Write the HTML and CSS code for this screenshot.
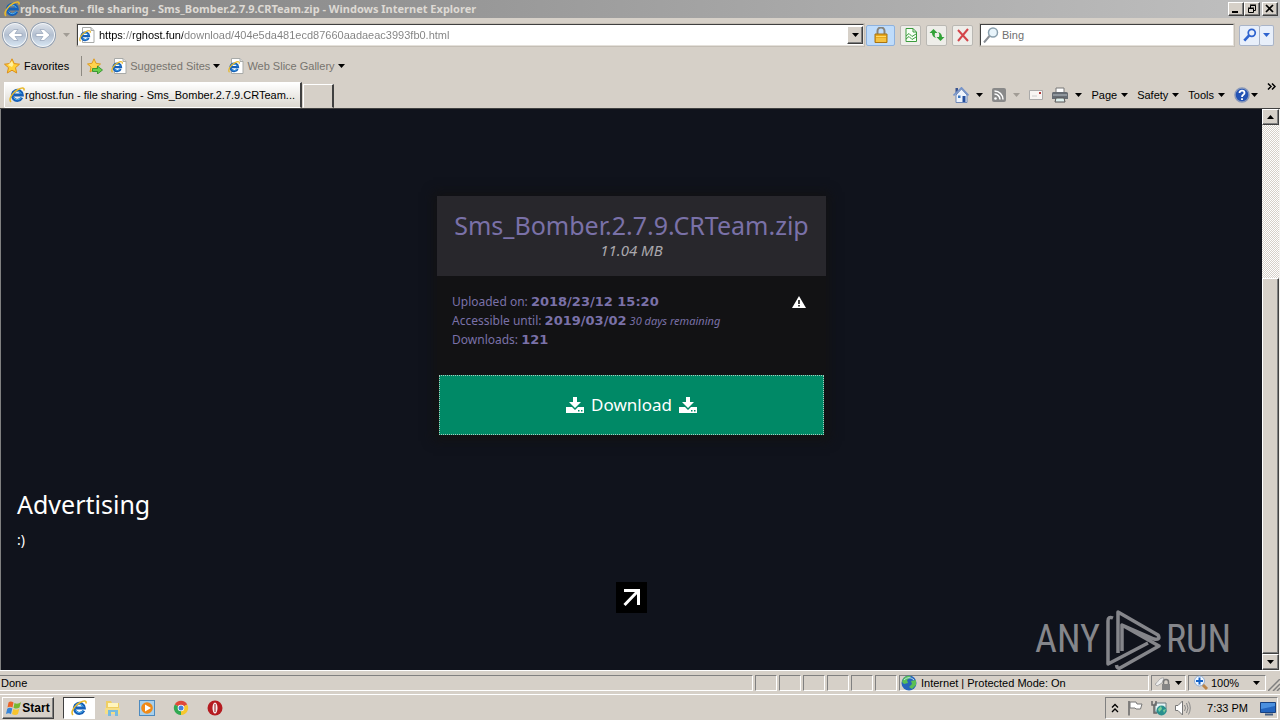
FILE: index.html
```html
<!DOCTYPE html>
<html lang="en">
<head>
    <meta charset="UTF-8">
    <meta name="viewport" content="width=device-width, initial-scale=1.0">
    <title>rghost.fun - file sharing - Sms_Bomber.2.7.9.CRTeam.zip</title>
    <link rel="stylesheet" href="styles.css">
</head>
<body>
    <svg class="defs" aria-hidden="true">
        <symbol id="ie" viewBox="0 0 16 16">
            <path d="M12.8 10.6A5 5 0 1 1 13.3 8H5" fill="none" stroke="#1660b8" stroke-width="3"/>
            <path d="M12.3 10.2A4.4 4.4 0 0 1 4.600 10.600M4.200 7A4.400 4.400 0 0 1 12.400 7" fill="none" stroke="#52b4ee" stroke-width="1"/>
            <path d="M2 15C-1 12 4 5 9 2.500C13 .3 16 .3 14.800 3.600" fill="none" stroke="#e8b92c" stroke-width="1.600"/>
        </symbol>
        <symbol id="ie-page" viewBox="0 0 16 16">
            <path d="M3.500 .5H12L15 3.500V15.500H3.500Z" fill="#fff" stroke="#a8aaa8"/>
            <path d="M12 .5V3.500H15" fill="#ddd" stroke="#a8aaa8"/>
            <use href="#ie" x="0" y="3" width="12" height="12"/>
        </symbol>
        <symbol id="caret" viewBox="0 0 7 4">
            <path d="M0 0H7L3.500 4Z" fill="currentColor"/>
        </symbol>
        <symbol id="save" viewBox="0 0 18 16">
            <path d="M7 0H11V5H15L9 11L3 5H7Z" fill="currentColor"/>
            <path d="M0 10H6L9 13L12 10H18V16H0Z" fill="currentColor"/>
            <path d="M12 13H13.500V14.500H12ZM15 13H16.500V14.500H15Z" fill="#008966"/>
        </symbol>
    </svg>

    <div class="titlebar">
        <svg class="icon"><use href="#ie"/></svg>
        <span class="caption">rghost.fun - file sharing - Sms_Bomber.2.7.9.CRTeam.zip - Windows Internet Explorer</span>
        <div class="window-buttons">
            <button class="bevel" aria-label="Minimize"><svg width="10" height="10" viewBox="0 0 10 10"><path d="M1 8H7" stroke="#000" stroke-width="2"/></svg></button>
            <button class="bevel" aria-label="Restore"><svg width="10" height="10" viewBox="0 0 10 10"><path d="M3.500 4V1.500H8.500V6.500H7M1.500 4.500H6.500V8.500H1.500ZM3 1H9M1 4H7" fill="none" stroke="#000"/></svg></button>
            <button class="bevel close" aria-label="Close"><svg width="10" height="10" viewBox="0 0 10 10"><path d="M1 1L8 8M8 1L1 8" stroke="#000" stroke-width="1.700"/></svg></button>
        </div>
    </div>

    <div class="navbar">
        <div class="history">
            <button class="round" aria-label="Back"><svg width="26" height="26" viewBox="0 0 26 26"><path d="M20 11.500H13L16 7.500H12L6 13L12 18.500H16L13 14.500H20Z" fill="#fff" stroke="#93a2b8" stroke-width=".7"/></svg></button>
            <button class="round" aria-label="Forward"><svg width="26" height="26" viewBox="0 0 26 26"><path d="M6 11.500H13L10 7.500H14L20 13L14 18.500H10L13 14.500H6Z" fill="#fff" stroke="#93a2b8" stroke-width=".7"/></svg></button>
            <button class="plain recent" aria-label="Recent pages"><svg class="caret faded"><use href="#caret"/></svg></button>
        </div>
        <div class="field address">
            <svg class="icon"><use href="#ie-page"/></svg>
            <input type="text" class="url" aria-label="Address" value="https://rghost.fun/download/404e5da481ecd87660aadaeac3993fb0.html">
            <button class="bevel drop" aria-label="Show addresses"><svg class="caret"><use href="#caret"/></svg></button>
        </div>
        <div class="nav-tools">
            <button class="tool lock" aria-label="Security report"><svg class="icon" viewBox="0 0 16 16"><path d="M4.500 8V4A3.500 3.500 0 0 1 11.500 4V8" fill="none" stroke="#87837a" stroke-width="2"/><path d="M2 7H14V15.500H2Z" fill="#e9a91b" stroke="#a87414"/><path d="M3 9.500H13M3 12H13M3 14H13" stroke="#ffd968"/></svg></button>
            <button class="tool" aria-label="Compatibility view"><svg class="icon" viewBox="0 0 16 16"><path d="M3 1.500H10L13.500 5V14.500H3Z" fill="#f7fff5" stroke="#3b9b3d"/><path d="M10 1.500V5H13M3 9L6 6.500L9 9.500L13 7M3 12L6 9.500L9 12.500L13 10" fill="none" stroke="#3b9b3d"/></svg></button>
            <button class="tool" aria-label="Refresh"><svg class="icon" viewBox="0 0 16 16"><path d="M4.500 2L.5 6H3C3 8.500 4.500 10.500 7 11C5.500 9.500 5.500 8 6 6H8.500ZM11.500 14L15.500 10H13C13 7.500 11.500 5.500 9 5C10.500 6.500 10.500 8 10 10H7.500Z" fill="#32a237"/></svg></button>
            <button class="tool" aria-label="Stop"><svg class="icon" viewBox="0 0 16 16"><path d="M3 3L13 14M13 2L3 14" stroke="#d4454a" stroke-width="2"/></svg></button>
        </div>
        <div class="field search">
            <svg class="icon" viewBox="0 0 16 16"><circle cx="10" cy="5.500" r="4.500" fill="#e8f4fb" stroke="#8aa0ae" stroke-width="1.500"/><path d="M6.500 9L1 15.500" stroke="#8a8f96" stroke-width="2"/></svg>
            <input type="text" aria-label="Search" placeholder="Bing">
        </div>
        <div class="search-buttons">
            <button class="tool" aria-label="Search"><svg width="14" height="14" viewBox="0 0 16 16"><circle cx="10" cy="5.500" r="4" fill="none" stroke="#2e63cf" stroke-width="2"/><path d="M7 8.500L1.500 14.500" stroke="#2e63cf" stroke-width="3"/></svg></button>
            <button class="tool narrow" aria-label="Search options"><svg class="caret blue"><use href="#caret"/></svg></button>
        </div>
    </div>

    <div class="favbar">
        <button class="plain favorites"><svg class="icon" viewBox="0 0 16 16"><path d="M8 .8L10.200 5.600L15.500 6.200L11.500 9.700L12.700 15L8 12.200L3.300 15L4.500 9.700L.5 6.200L5.800 5.600Z" fill="#ffd13a" stroke="#dd8e18"/><path d="M8 3L9.400 6.500L8 9L4 7Z" fill="#fff0a0"/></svg>Favorites</button>
        <button class="plain add" aria-label="Add to favorites bar"><svg class="icon" viewBox="0 0 16 16"><path d="M7 .8L9 5.300L13.500 6L10 9L11 14L7 11.500L3 14L4 9L.5 6L5 5.300Z" fill="#ffd34d" stroke="#dd9a22"/><path d="M5.500 10.500H10.500V8L15.500 12L10.500 16V13.500H5.500Z" fill="#6ad04d" stroke="#258b24" stroke-width=".8"/></svg></button>
        <button class="plain muted"><svg class="icon"><use href="#ie-page"/></svg>Suggested Sites <svg class="caret"><use href="#caret"/></svg></button>
        <button class="plain muted"><svg class="icon"><use href="#ie-page"/></svg>Web Slice Gallery <svg class="caret"><use href="#caret"/></svg></button>
    </div>

    <div class="tabrow">
        <button class="tab"><svg class="icon"><use href="#ie"/></svg>rghost.fun - file sharing - Sms_Bomber.2.7.9.CRTeam...</button>
        <button class="new-tab" aria-label="New tab"></button>
        <div class="commands">
            <button class="plain wide" aria-label="Home"><svg class="icon" viewBox="0 0 16 16"><path d="M2.500 1H5V5L2.500 7Z" fill="#39538e"/><path d="M3 8L8.500 2L14 8V15.500H3Z" fill="#edf3fc" stroke="#6d87b8"/><path d="M.5 8.500L8.500 .8L15.500 8.500" fill="none" stroke="#7593c9" stroke-width="1.600"/><path d="M9.500 9H12.500V15H9.500Z" fill="#244f9d"/><path d="M5 8.500H7.500V11H5Z" fill="#3a77bf"/></svg><svg class="caret"><use href="#caret"/></svg></button>
            <button class="plain wide" aria-label="Feeds"><svg class="icon small" viewBox="0 0 14 14"><rect width="14" height="14" rx="2" fill="#898989"/><circle cx="3.500" cy="10.500" r="1.300" fill="#fff"/><path d="M2.500 6A5.500 5.500 0 0 1 8 11.500M2.500 3A8.500 8.500 0 0 1 11 11.500" fill="none" stroke="#fff" stroke-width="1.500"/></svg><svg class="caret faded"><use href="#caret"/></svg></button>
            <button class="plain" aria-label="Read mail"><svg class="icon small" viewBox="0 0 14 14"><path d="M.5 2.500H13.500V11.500H.5Z" fill="#f7f5f3" stroke="#aaa"/><path d="M10 4H12V6H10Z" fill="#b33b3b"/><path d="M3 8H8" stroke="#ccc"/></svg></button>
            <button class="plain wide" aria-label="Print"><svg class="icon" viewBox="0 0 16 16"><path d="M4 1H12V6H4Z" fill="#fff" stroke="#777"/><path d="M0 6.500C0 5 1 5 2 5H14C16 5 16 6 16 7V12H0Z" fill="#666c73"/><path d="M1 8H15" stroke="#b8c0c6"/><path d="M4 11H12L13 15H3Z" fill="#dff1ef" stroke="#555"/></svg><svg class="caret"><use href="#caret"/></svg></button>
            <button class="plain">Page<svg class="caret"><use href="#caret"/></svg></button>
            <button class="plain">Safety<svg class="caret"><use href="#caret"/></svg></button>
            <button class="plain">Tools<svg class="caret"><use href="#caret"/></svg></button>
            <button class="plain help" aria-label="Help"><svg class="icon" viewBox="0 0 16 16"><circle cx="8" cy="8" r="7" fill="#2453b4" stroke="#8797b9" stroke-width="1.500"/><path d="M5.500 6C5.500 2.800 10.500 3 10.500 6C10.500 8 8 7.700 8 10M8 11.300V13" fill="none" stroke="#fff" stroke-width="1.800"/></svg><svg class="caret"><use href="#caret"/></svg></button>
            <button class="plain more" aria-label="More commands"><svg width="9" height="7" viewBox="0 0 9 7"><path d="M1 .5L4 3.500L1 6.500M5 .5L8 3.500L5 6.500" fill="none" stroke="#000" stroke-width="1.500"/></svg></button>
        </div>
    </div>

    <div class="viewport">
        <main class="page">
            <section class="file-card">
                <header class="file-header">
                    <h1>Sms_Bomber.2.7.9.CRTeam.zip</h1>
                    <em>11.04 MB</em>
                </header>
                <div class="file-info">
                    <div>
                        <p>Uploaded on: <strong>2018/23/12 15:20</strong></p>
                        <p>Accessible until: <strong>2019/03/02</strong> <em>30 days remaining</em></p>
                        <p>Downloads: <strong>121</strong></p>
                    </div>
                    <a href="#" class="report" aria-label="Report file"><svg width="14" height="12" viewBox="0 0 14 12"><path d="M7 0L14 12H0Z" fill="#fff"/><path d="M7 4V8M7 9V10.500" stroke="#111" stroke-width="1.600"/></svg></a>
                </div>
                <button class="download"><svg width="18" height="16"><use href="#save"/></svg>Download<svg width="18" height="16"><use href="#save"/></svg></button>
            </section>
            <section class="ads">
                <h2>Advertising</h2>
                <p>:)</p>
            </section>
            <a href="#" class="expand" aria-label="Open"><svg width="31" height="31" viewBox="0 0 31 31"><path d="M8 8.500H22.500V23M22 9L8.500 23" fill="none" stroke="#fff" stroke-width="3"/></svg></a>
            <div class="watermark">
                <span>ANY</span>
                <svg width="58" height="62" viewBox="0 0 58 62"><path d="M14 45V4L54 27Q57 32 50 31L18 17V43M18 17L55 38L16 60Q13 61 12.500 57M9 10Q4 8 4 13V56L44 35" fill="none" stroke="#85868b" stroke-width="3.500" stroke-linejoin="round"/></svg>
                <span>RUN</span>
            </div>
        </main>
        <div class="scrollbar">
            <button class="bevel" aria-label="Scroll up"><svg class="caret up"><use href="#caret"/></svg></button>
            <div class="track"><div class="thumb bevel"></div></div>
            <button class="bevel" aria-label="Scroll down"><svg class="caret"><use href="#caret"/></svg></button>
        </div>
    </div>

    <div class="statusbar">
        <div class="cell message">Done</div>
        <div class="cell"></div>
        <div class="cell"></div>
        <div class="cell"></div>
        <div class="cell"></div>
        <div class="cell"></div>
        <div class="cell"></div>
        <div class="cell zone"><svg class="icon" viewBox="0 0 16 16"><circle cx="8" cy="8" r="7.500" fill="#2764ba"/><path d="M2 4C5 0 9 0 10 2L6 5L7 8L3 9L1 7ZM10 6L15 5V10L11 14L8 12L11 9Z" fill="#5abf54"/><path d="M3 5C6 2 10 2 13 5" fill="none" stroke="#b9e6f2"/></svg>Internet | Protected Mode: On</div>
        <div class="cell privacy"><svg class="icon" viewBox="0 0 16 16"><path d="M0 9C3 8 4 2 9 3L7 8L2 11Z" fill="#eee" stroke="#aaa"/><path d="M8.500 9V7A2.500 2.500 0 0 1 13.500 7V9" fill="none" stroke="#777" stroke-width="1.500"/><path d="M7 9H15V15H7Z" fill="#858585"/></svg><svg class="caret"><use href="#caret"/></svg></div>
        <div class="cell zoom"><svg class="icon" viewBox="0 0 16 16"><path d="M9 9L14 14" stroke="#bb8548" stroke-width="3"/><circle cx="6.500" cy="6" r="5" fill="#eef6ff" stroke="#91add2"/><path d="M6.500 2.500V9.500M3 6H10" stroke="#1463c9" stroke-width="2"/></svg><span>100%</span><svg class="caret"><use href="#caret"/></svg></div>
        <svg class="grip" width="12" height="12" viewBox="0 0 12 12"><path d="M0 12L12 0M5 12L12 5M9 12L12 9" stroke="#808080" stroke-width="1.500"/></svg>
    </div>

    <div class="taskbar">
        <button class="bevel start"><svg class="icon" viewBox="0 0 16 16"><path d="M2.500 2.500C4 1 6 1.500 7.500 2.500L6.500 7.500C5 6.500 3 6.500 1.500 7.500Z" fill="#eb6326"/><path d="M8.500 3C11 4.300 13 3.500 15 2L13.500 7.500C11.500 9 9.500 8.800 7.500 7.700Z" fill="#77b82f"/><path d="M1.200 8.700C3 7.500 5 7.700 6.300 8.600L5 14C3.500 13 1.500 13 0 14Z" fill="#3685d8"/><path d="M7.300 9C9.500 10 11.500 10 13.300 8.700L12 14C10 15.500 8 15.200 6 14Z" fill="#f8c42c"/></svg>Start</button>
        <div class="launchers">
            <button class="launcher active" aria-label="Internet Explorer"><svg class="icon"><use href="#ie"/></svg></button>
            <button class="launcher" aria-label="Explorer"><svg class="icon" viewBox="0 0 16 16"><path d="M1 1H6L7 3H14V13H1Z" fill="#f0cf62"/><path d="M3 3H13V7H3Z" fill="#fff5bd"/><path d="M0 8H15V14H0Z" fill="#f5de86"/><path d="M3 16V10H13V16H10V12H6V16Z" fill="#77bbdf"/></svg></button>
            <button class="launcher" aria-label="Media Player"><svg class="icon" viewBox="0 0 16 16"><rect x=".5" y=".5" width="15" height="15" fill="#a8d0ec" stroke="#4d8abf"/><circle cx="8" cy="8" r="5.800" fill="#f18a16"/><path d="M6 4.500L12 8L6 11.500Z" fill="#fff"/></svg></button>
            <button class="launcher" aria-label="Chrome"><svg class="icon" viewBox="0 0 16 16"><path d="M8 8L1.800 4.500A7 7 0 0 1 14.200 4.500Z" fill="#df4839"/><path d="M8 8V15A7 7 0 0 1 1.800 4.500Z" fill="#31a952"/><path d="M8 8L14.200 4.500A7 7 0 0 1 8 15Z" fill="#f6c72d"/><circle cx="8" cy="8" r="3.300" fill="#fff"/><circle cx="8" cy="8" r="2.500" fill="#4580dd"/></svg></button>
            <button class="launcher" aria-label="Opera"><svg class="icon" viewBox="0 0 16 16"><circle cx="8" cy="8" r="7.500" fill="#b51b20"/><ellipse cx="8" cy="8" rx="2.500" ry="5.500" fill="#f9eeee"/><path d="M8 4V12" stroke="#8e171b"/></svg></button>
        </div>
        <div class="tray">
            <svg width="8" height="10" viewBox="0 0 8 10"><path d="M1 4.500L4 1.500L7 4.500M1 9L4 6L7 9" fill="none" stroke="#000" stroke-width="1.300"/></svg>
            <svg class="icon" viewBox="0 0 16 16"><path d="M2 1V15.500" stroke="#666" stroke-width="1.500"/><path d="M3 2H9L10 4H15L13.500 9H9L8 8H3Z" fill="#fff" stroke="#777"/></svg>
            <svg class="icon" viewBox="0 0 16 16"><path d="M4 3H15V12H4Z" fill="#e6f3f4" stroke="#687a80"/><path d="M1 1V5H5V1M3 5V13H6" fill="none" stroke="#666" stroke-width="1.500"/><circle cx="10.500" cy="10.500" r="5" fill="#298f8e"/><path d="M7 9L10 6L11 9L8 12ZM12 10L15 9L13 13Z" fill="#7ccf9a"/></svg>
            <svg class="icon" viewBox="0 0 16 16"><path d="M.5 5.500H3L7.500 1V15L3 10.500H.5Z" fill="#fff" stroke="#777"/><path d="M9.500 5Q11.500 8 9.500 11M11.500 3Q14.500 8 11.500 13M13.500 1.500Q17 8 13.500 14.500" fill="none" stroke="#888"/></svg>
            <span class="clock">7:33 PM</span>
            <svg class="icon" viewBox="0 0 16 16"><path d="M.5 2.500H15.500V12.500H.5Z" fill="#2465be" stroke="#174181"/><path d="M1 3H15V6L1 9Z" fill="#4b90df"/><path d="M5 14.500H13" stroke="#445f83" stroke-width="2"/></svg>
        </div>
    </div>
</body>
</html>
```
FILE: styles.css
```css
* {
    box-sizing: border-box;
}

body {
    display: flex;
    flex-direction: column;
    height: 100vh;
    margin: 0;
    overflow: hidden;
    background: #d6d0c8;
    color: #000;
    font: 11px/14px "Liberation Sans", Arial, sans-serif;
}

button,
input {
    margin: 0;
    padding: 0;
    border: none;
    color: inherit;
    font: inherit;
}

svg {
    flex: none;
}

.defs {
    position: absolute;
    width: 0;
    height: 0;
}

.icon {
    width: 16px;
    height: 16px;
}

.icon.small {
    width: 14px;
    height: 14px;
}

.caret {
    width: 7px;
    height: 4px;
}

.caret.up {
    transform: rotate(180deg);
}

.caret.faded {
    color: #a19c95;
}

.caret.blue {
    color: #2e63cf;
}

.bevel {
    display: flex;
    align-items: center;
    justify-content: center;
    background: #d6d0c8;
    border: 1px solid;
    border-color: #fff #404040 #404040 #fff;
    box-shadow: inset -1px -1px #808080;
}

.plain {
    display: flex;
    align-items: center;
    gap: 4px;
    background: none;
}

/* title bar */
.titlebar {
    display: flex;
    align-items: center;
    height: 18px;
    padding: 0 2px 0 4px;
    background: linear-gradient(to right, #808080, #c0c0c0);
}

.caption {
    flex: 1;
    color: #dedad4;
    font-family: "Noto Sans", sans-serif;
    font-weight: bold;
}

.window-buttons {
    display: flex;
}

.window-buttons .bevel {
    width: 16px;
    height: 14px;
}

.window-buttons .close {
    margin-left: 2px;
}

/* address row */
.navbar {
    display: flex;
    align-items: center;
    height: 34px;
    padding: 0 6px 0 2px;
}

.history {
    display: flex;
    align-items: center;
    gap: 2px;
    width: 75px;
}

.round {
    width: 26px;
    height: 26px;
    border-radius: 50%;
    background: linear-gradient(#e4e8ee, #b3bfd0 50%, #dcebf8);
    box-shadow: inset 0 0 0 1px #8e99a8, inset 0 0 0 2px #f4f6f8;
}

.recent {
    margin-left: 5px;
}

.field {
    display: flex;
    align-items: center;
    height: 22px;
    background: #fff;
    border: 1px solid;
    border-color: #404040 #e4e0da #e4e0da #404040;
    box-shadow: 0 0 0 1px #c4beb5;
}

.field input {
    flex: 1;
    min-width: 0;
    height: 18px;
    background-color: transparent;
}

.address {
    flex: 1;
    padding-left: 1px;
}

.address .url {
    margin-left: 4px;
    color: transparent;
    background: linear-gradient(to right, #000 25px, #808080 25px, #808080 34px, #000 34px, #000 84px, #808080 84px);
    -webkit-background-clip: text;
    background-clip: text;
}

.drop {
    width: 16px;
    height: 18px;
}

.nav-tools {
    display: flex;
    gap: 5px;
    margin: 0 7px 0 2px;
}

.tool {
    display: flex;
    align-items: center;
    justify-content: center;
    width: 21px;
    height: 21px;
    background: #eeede9;
    border: 1px solid #bab8b3;
    border-radius: 2px;
}

.tool.lock {
    width: 29px;
    background: #bfdcfb;
    border-color: #8eb2de;
}

.search {
    width: 254px;
    padding-left: 2px;
}

.search input {
    margin-left: 3px;
}

.search input::placeholder {
    color: #707070;
}

.search-buttons {
    display: flex;
    margin-left: 5px;
}

.search-buttons .tool {
    background: #e8effa;
    border-color: #a9b4c8;
}

.search-buttons .narrow {
    width: 14px;
    border-left: none;
}

/* favourites row */
.favbar {
    display: flex;
    align-items: center;
    gap: 8px;
    height: 28px;
    padding-left: 4px;
}

.favorites {
    margin-right: 4px;
}

.add {
    height: 20px;
    padding-left: 5px;
    border-left: 1px solid #8d8982;
}

.muted {
    gap: 3px;
    color: #77746f;
}

.muted .caret {
    color: #000;
}

/* tabs and commands */
.tabrow {
    display: flex;
    align-items: flex-end;
    height: 29px;
    padding: 0 4px;
    border-bottom: 1px solid #404040;
}

.tab {
    display: flex;
    align-items: center;
    width: 298px;
    height: 26px;
    padding-left: 4px;
    background: linear-gradient(#fff, #dcd8d0);
    border: 1px solid;
    border-color: #fff #404040 transparent #fff;
    border-right-width: 2px;
    white-space: nowrap;
}

.new-tab {
    width: 31px;
    height: 24px;
    margin-left: 1px;
    background: none;
    border: 1px solid;
    border-color: #fff #404040 transparent #fff;
    border-right-width: 2px;
}

.commands {
    display: flex;
    align-items: center;
    gap: 9px;
    height: 27px;
    margin-left: auto;
}

.commands .wide {
    gap: 7px;
}

.commands .help {
    gap: 1px;
}

.commands .more {
    align-self: flex-start;
    padding-top: 2px;
}

/* web page */
.viewport {
    display: flex;
    flex: 1;
    min-height: 0;
    border-left: 1px solid #808080;
    border-right: 1px solid #f4f2ee;
}

.page {
    position: relative;
    display: flex;
    flex: 1;
    flex-direction: column;
    align-items: center;
    padding: 87px 16px 0;
    background: #10131c;
    color: #fff;
    font-family: "Noto Sans", "Open Sans", sans-serif;
}

.file-card {
    width: 389px;
    padding-bottom: 2px;
    background: #121214;
    box-shadow: 0 0 10px 4px #121214;
    color: #7a71a8;
}

.file-header {
    display: flex;
    flex-direction: column;
    align-items: center;
    height: 80px;
    padding-top: 13px;
    background: #28272c;
}

.file-header h1 {
    margin: 0;
    font-size: 25px;
    font-weight: normal;
    line-height: 32px;
}

.file-header em {
    color: #aaa8ac;
    font-size: 15px;
    line-height: 18px;
}

.file-info {
    display: flex;
    justify-content: space-between;
    height: 99px;
    padding: 16px 20px 0 15px;
    font-size: 12px;
    line-height: 19px;
}

.file-info p {
    margin: 0;
}

.file-info strong {
    font-family: "DejaVu Sans", sans-serif;
    font-size: 13px;
}

.file-info em {
    font-size: 11px;
}

.report {
    padding-top: 2px;
}

.download {
    display: flex;
    align-items: center;
    justify-content: center;
    gap: 7px;
    width: 385px;
    height: 60px;
    margin: 0 auto;
    background: #008966;
    border: 1px dotted #a8c8bc;
    color: #fff;
    font-size: 17px;
}

.ads {
    align-self: stretch;
    margin-top: 49px;
}

.ads h2 {
    margin: 0;
    font-size: 25px;
    font-weight: normal;
    line-height: 36px;
}

.ads p {
    margin: 8px 0 0;
    font-size: 14px;
    line-height: 20px;
}

.expand {
    height: 31px;
    margin-top: 32px;
    background: #000;
}

.watermark {
    position: absolute;
    right: 31px;
    bottom: 0;
    display: flex;
    align-items: center;
    gap: 4px;
    color: #85868b;
    font: 38px/60px "Liberation Sans Narrow", "Roboto Condensed", sans-serif;
}

.scrollbar {
    display: flex;
    flex-direction: column;
    width: 17px;
    background: #ece9e4;
}

.scrollbar button {
    height: 16px;
}

.track {
    display: flex;
    flex: 1;
    flex-direction: column;
    justify-content: flex-end;
    background: repeating-conic-gradient(#fff 0 25%, #d6d0c8 0 50%) 0 0 / 2px 2px;
}

.thumb {
    height: 71%;
}

/* status bar */
.statusbar {
    display: flex;
    gap: 2px;
    height: 24px;
    padding: 4px 0 3px;
    border-top: 1px solid #fff;
}

.cell {
    display: flex;
    align-items: center;
    width: 22px;
    border: 1px solid;
    border-color: #808080 #fff #fff #808080;
}

.message {
    flex: 1;
    border-left: none;
    padding-left: 1px;
}

.zone {
    gap: 4px;
    width: 250px;
    padding-left: 1px;
}

.privacy {
    gap: 4px;
    width: 35px;
    padding-left: 3px;
}

.zoom {
    gap: 2px;
    width: 78px;
    padding-left: 4px;
}

.zoom .caret {
    margin-left: 12px;
}

.grip {
    align-self: flex-end;
}

/* task bar */
.taskbar {
    display: flex;
    align-items: center;
    height: 26px;
    padding: 0 2px;
    border-top: 1px solid #fff;
}

.start {
    width: 52px;
    height: 22px;
    font-size: 12px;
    font-weight: bold;
}

.launchers {
    display: flex;
    gap: 2px;
    margin-left: 9px;
}

.launcher {
    display: flex;
    align-items: center;
    justify-content: center;
    width: 32px;
    height: 22px;
    background: none;
}

.launcher.active {
    background: #fff;
    border: 1px solid;
    border-color: #404040 #fff #fff #404040;
}

.tray {
    display: flex;
    align-items: center;
    gap: 8px;
    height: 22px;
    margin-left: auto;
    padding: 0 1px 0 5px;
    border: 1px solid;
    border-color: #808080 #fff #fff #808080;
}

.clock {
    margin: 0 4px 0 8px;
}
```
